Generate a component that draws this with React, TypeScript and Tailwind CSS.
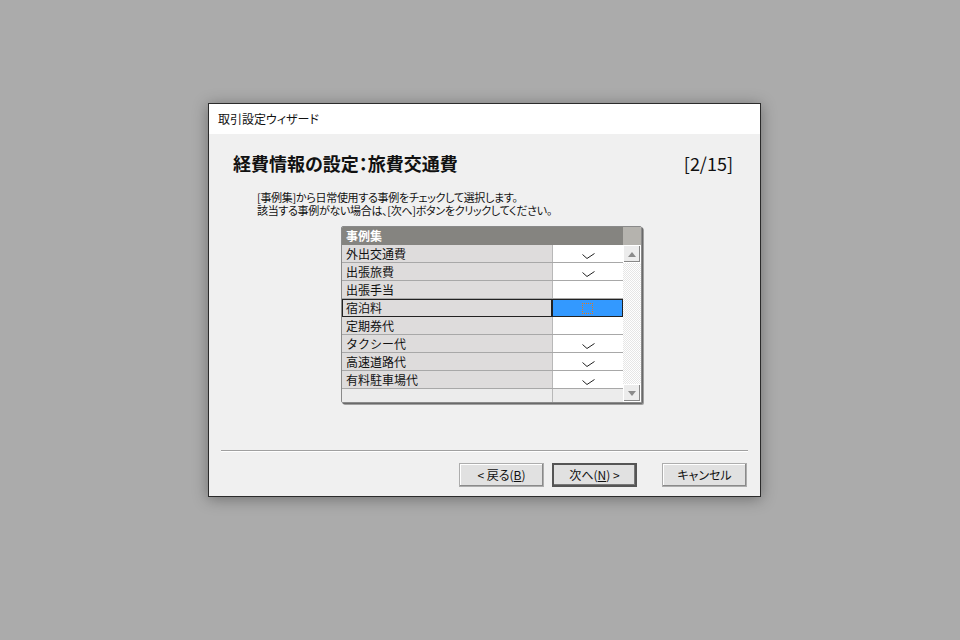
import React from 'react';

const rows = [
  { label: '外出交通費', checked: true },
  { label: '出張旅費', checked: true },
  { label: '出張手当', checked: false },
  { label: '宿泊料', checked: false, selected: true },
  { label: '定期券代', checked: false },
  { label: 'タクシー代', checked: true },
  { label: '高速道路代', checked: true },
  { label: '有料駐車場代', checked: true },
];

const Check = () => (
  <svg width="13" height="7" viewBox="0 0 13 7" className="block">
    <polyline points="0.5,1.5 5,5.5 12.5,0.5" fill="none" stroke="#222" strokeWidth="1" />
  </svg>
);

const Arrow = ({ up }: { up?: boolean }) => (
  <svg width="8" height="5" viewBox="0 0 8 5" className="block">
    <polygon points={up ? '0,5 8,5 4,0' : '0,0 8,0 4,5'} fill="#8a8a8a" />
  </svg>
);

const Button = ({ children, primary }: { children: React.ReactNode; primary?: boolean }) => (
  <button
    className={
      'w-[85px] h-[24px] bg-[#e1e1e1] text-[12px] text-[#111] flex items-center justify-center [font-feature-settings:"palt"] ' +
      (primary
        ? 'border-2 border-[#555] shadow-[inset_-1px_-1px_0_#777]'
        : 'border border-[#adadad] shadow-[inset_-1px_-1px_0_#8a8a8a,inset_1px_1px_0_#fff]')
    }
  >
    {children}
  </button>
);

export default function App() {
  return (
    <div
      className="w-[960px] h-[640px] bg-[#ababab] pl-[208px] pt-[103px]"
      style={{ fontFamily: '"Noto Sans CJK JP", "Liberation Sans", sans-serif' }}
    >
      <div className="w-[553px] h-[394px] border border-[#2b2b2b] bg-[#f0f0f0] flex flex-col shadow-[0_2px_14px_rgba(0,0,0,0.35)]">
        {/* Title bar */}
        <div className="h-[30px] bg-white flex items-center pl-[9px] text-[12px] text-[#111] [font-feature-settings:'palt']">
          取引設定ウィザード
        </div>

        {/* Heading */}
        <div className="flex items-center justify-between pl-[24px] pr-[27px] pt-[17px] h-[41px] text-[18px] leading-[24px] text-[#111]">
          <span className="font-bold [font-feature-settings:'palt']">経費情報の設定：旅費交通費</span>
          <span>[2/15]</span>
        </div>

        {/* Instructions */}
        <div className="pl-[48px] mt-[16px] text-[11px] leading-[13px] text-[#111] [font-feature-settings:'palt'] tracking-[-0.3px]">
          <div>[事例集]から日常使用する事例をチェックして選択します。</div>
          <div>該当する事例がない場合は、[次へ]ボタンをクリックしてください。</div>
        </div>

        {/* Grid */}
        <div className="ml-[132px] mt-[9px] w-[301px] h-[177px] border border-[#8a8a8a] rounded-[2px] shadow-[1px_1px_0_#6a6a6a,2px_2px_0_#a0a0a0] flex overflow-hidden">
          <div className="w-[281px] flex flex-col">
            <div className="h-[18px] bg-[#858480] text-white font-bold text-[12px] pl-[4px] flex items-center">
              事例集
            </div>
            {rows.map((r) =>
              r.selected ? (
                <div key={r.label} className="h-[18px] flex border-[1.5px] border-[#222]">
                  <div className="w-[209px] bg-[#dedcdc] text-[12px] text-[#111] pl-[3px] flex items-center border-r border-[#222]">
                    {r.label}
                  </div>
                  <div className="flex-1 bg-[#3399ff] flex items-center justify-center border-l border-[#222]">
                    <div className="w-[11px] h-[11px] border border-dotted border-[#e07a20]" />
                  </div>
                </div>
              ) : (
                <div key={r.label} className="h-[18px] flex border-b border-[#a8a8a8]">
                  <div className="w-[211px] bg-[#dedcdc] text-[12px] text-[#111] pl-[4px] flex items-center border-r border-[#b8b8b8]">
                    {r.label}
                  </div>
                  <div className="flex-1 bg-white flex items-end justify-center pb-[2px] pl-[1px]">
                    {r.checked && <Check />}
                  </div>
                </div>
              )
            )}
            <div className="flex-1 flex">
              <div className="w-[211px] bg-[#ececec] border-r border-[#b8b8b8]" />
              <div className="flex-1 bg-[#ececec]" />
            </div>
          </div>

          {/* Scrollbar */}
          <div className="w-[18px] flex flex-col">
            <div className="h-[18px] bg-[#b5b3ae]" />
            <div className="h-[18px] bg-[#ececec] border border-[#fff] shadow-[inset_-1px_-1px_0_#888] flex items-center justify-center">
              <Arrow up />
            </div>
            <div className="flex-1 bg-[repeating-conic-gradient(#ffffff_0_25%,#e6e6e6_0_50%)] bg-[length:2px_2px]" />
            <div className="h-[18px] bg-[#ececec] border border-[#fff] shadow-[inset_-1px_-1px_0_#888] flex items-center justify-center">
              <Arrow />
            </div>
          </div>
        </div>

        {/* Separator */}
        <div className="mx-[12px] mt-[47px] h-[2px] border-t border-[#a0a0a0] border-b border-b-white" />

        {/* Buttons */}
        <div className="flex items-center pl-[250px] mt-[11px] gap-[8px]">
          <Button>&lt; 戻る(<span className="underline">B</span>)</Button>
          <Button primary>次へ(<span className="underline">N</span>) &gt;</Button>
          <div className="ml-[17px]">
            <Button>キャンセル</Button>
          </div>
        </div>
      </div>
    </div>
  );
}
